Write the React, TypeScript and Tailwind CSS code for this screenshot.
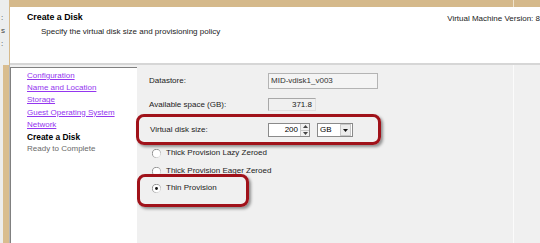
import React from "react";

function Radio({ checked }: { checked?: boolean }) {
  return (
    <svg width="9" height="9" viewBox="0 0 9 9" className="shrink-0">
      <defs>
        <linearGradient id={checked ? "rg1" : "rg0"} x1="0" y1="0" x2="1" y2="1">
          <stop offset="0" stopColor="#7a7a7a" />
          <stop offset="0.5" stopColor="#9a9a9a" />
          <stop offset="1" stopColor="#f4f4f4" />
        </linearGradient>
      </defs>
      <circle cx="4.5" cy="4.5" r="4.1" fill="white" stroke={`url(#${checked ? "rg1" : "rg0"})`} strokeWidth="0.9" />
      {checked && <circle cx="4.5" cy="4.5" r="1.4" fill="#111" />}
    </svg>
  );
}

export default function App() {
  const navLinks = ["Configuration", "Name and Location", "Storage", "Guest Operating System", "Network"];
  return (
    <div className="relative w-[540px] h-[243px] overflow-hidden flex font-['Liberation_Sans',Arial,sans-serif] text-[8px] leading-[12px] text-black bg-[#f0f0f0]">
      {/* left strip */}
      <div className="w-[10px] shrink-0 flex flex-col">
        <div className="h-[65px] flex">
          <div className="w-[9px] bg-[#eceeee] flex flex-col pt-[11px] pl-[1px] text-[#444] leading-[13px]">
            <span>:</span>
            <span>s</span>
            <span>:</span>
          </div>
          <div className="w-[1px] bg-[#d6ba8c]" />
        </div>
        <div className="flex-1 flex">
          <div className="w-[3px] bg-[#ededed]" />
          <div className="w-[6px] bg-[#d9bd8f]" />
          <div className="w-[1px] bg-[#b5b5b5]" />
        </div>
      </div>

      {/* main */}
      <div className="flex-1 flex flex-col">
        <div className="h-[7px] flex bg-[#d5b98b] shrink-0">
          <div className="w-[503px]" />
          <div className="w-[1px] bg-[#efe3cc]" />
        </div>
        <div className="h-[58px] shrink-0 bg-white border-b-2 border-[#d6d6d6] flex justify-between pt-[5px]">
          <div className="pl-[17px] flex flex-col">
            <div className="font-bold text-[8.8px] leading-[11px]">Create a Disk</div>
            <div className="pl-[14px] mt-[3px] leading-[11px] text-[#222]">Specify the virtual disk size and provisioning policy</div>
          </div>
          <div className="pt-[1px] leading-[11px] text-[#222] whitespace-nowrap">Virtual Machine Version: 8</div>
        </div>

        <div className="flex-1 flex">
          {/* nav */}
          <div className="w-[127px] shrink-0 mt-[2px] bg-white border-l border-t border-[#808080] pl-[16px] pt-[2px] flex flex-col">
            {navLinks.map((t) => (
              <span key={t} className="text-[#9436ef] underline leading-[12.2px]">{t}</span>
            ))}
            <span className="font-bold leading-[12.2px] text-[8.4px]">Create a Disk</span>
            <span className="text-[#6a6a6a] leading-[12.2px]">Ready to Complete</span>
          </div>

          {/* right panel */}
          <div className="flex-1 flex">
            <div className="w-[376px] shrink-0 pl-[12px] pt-[8px] flex flex-col">
              <div className="h-[16px] flex items-center">
                <span className="w-[119px] text-[#222]">Datastore:</span>
                <div className="w-[110px] h-[16px] border border-[#b4b4b4] bg-[#f4f4f4] flex items-center pl-[2px] text-[#333]">MID-vdisk1_v003</div>
              </div>
              <div className="h-[13px] mt-[9px] flex items-center">
                <span className="w-[119px] text-[#222]">Available space (GB):</span>
                <div className="w-[48px] h-[13px] border border-[#a8a8a8] border-b-[#e0e0e0] border-r-[#e0e0e0] bg-[#f0f0f0] flex items-center justify-end pr-[3px] text-[#222]">371.8</div>
              </div>
              <div className="h-[14px] mt-[12px] flex items-center">
                <span className="w-[119px] pl-[1px] text-[#222]">Virtual disk size:</span>
                <div className="w-[42px] h-[14px] border border-[#8a8a8a] bg-white flex">
                  <div className="flex-1 flex items-center justify-end pr-[2px]">200</div>
                  <div className="w-[9px] flex flex-col border-l border-[#c8c8c8] bg-[#f2f2f2]">
                    <div className="flex-1 flex items-center justify-center border-b border-[#c8c8c8]">
                      <svg width="5" height="3" viewBox="0 0 5 3"><path d="M0 3 L2.5 0 L5 3 Z" fill="#444" /></svg>
                    </div>
                    <div className="flex-1 flex items-center justify-center">
                      <svg width="5" height="3" viewBox="0 0 5 3"><path d="M0 0 L2.5 3 L5 0 Z" fill="#444" /></svg>
                    </div>
                  </div>
                </div>
                <div className="w-[36px] h-[14px] ml-[7px] border border-[#8a8a8a] bg-white flex items-center">
                  <span className="flex-1 pl-[2px]">GB</span>
                  <div className="w-[11px] h-[12px] mr-[1px] bg-[#ececec] border border-[#c8c8c8] flex items-center justify-center">
                    <svg width="5" height="3" viewBox="0 0 5 3"><path d="M0 0 L2.5 3 L5 0 Z" fill="#111" /></svg>
                  </div>
                </div>
              </div>
              <div className="h-[12px] mt-[10px] flex items-center pl-[3px] gap-[5px] text-[#222]">
                <Radio />
                <span>Thick Provision Lazy Zeroed</span>
              </div>
              <div className="h-[12px] mt-[6px] flex items-center pl-[3px] gap-[5px] text-[#222]">
                <Radio />
                <span>Thick Provision Eager Zeroed</span>
              </div>
              <div className="h-[12px] mt-[5px] flex items-center pl-[3px] gap-[5px] text-[#222]">
                <Radio checked />
                <span>Thin Provision</span>
              </div>
            </div>
            <div className="w-[1px] bg-[#fbfbfb]" />
            <div className="flex-1" />
          </div>
        </div>
      </div>

      {/* annotation highlights */}
      <div className="absolute left-[136px] top-[114px] w-[245px] h-[31px] rounded-[8px] border-[3px] border-[#a0121a] shadow-[2px_2px_3px_rgba(0,0,0,0.4)]" />
      <div className="absolute left-[137px] top-[174px] w-[112px] h-[33px] rounded-[8px] border-[3px] border-[#a0121a] shadow-[2px_2px_3px_rgba(0,0,0,0.4)]" />
    </div>
  );
}
